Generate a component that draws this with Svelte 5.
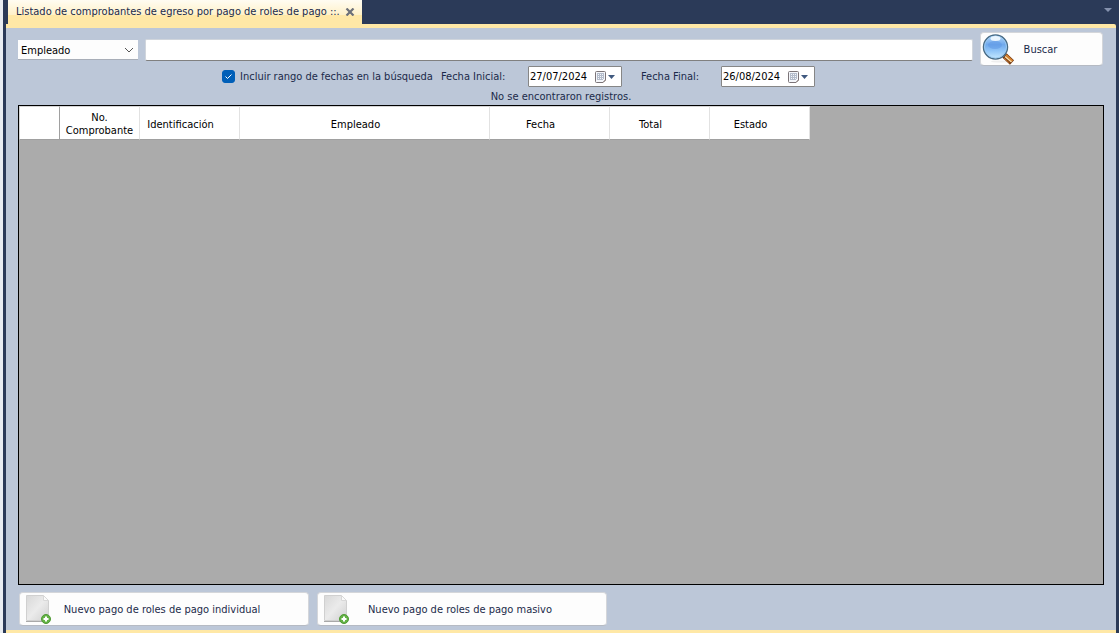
<script>
  let field = $state('Empleado');
  let query = $state('');
  let useRange = $state(true);
  let from = $state('27/07/2024');
  let to = $state('26/08/2024');
  const columns = [
    { name: 'Identificación', cls: 'c100' },
    { name: 'Empleado', cls: 'c250' },
    { name: 'Fecha', cls: 'c120' },
    { name: 'Total', cls: 'c100' },
    { name: 'Estado', cls: 'c100' }
  ];
  const actions = ['Nuevo pago de roles de pago individual', 'Nuevo pago de roles de pago masivo'];
</script>

{#snippet calendar()}
  <svg width="22" height="14" viewBox="0 0 22 14" aria-hidden="true">
    <path d="M2.500 1.500h8q1 0 1 1v7.500l-2.500 2.500h-6.500q-1 0-1-1v-9q0-1 1-1z" fill="#f4f6fa" stroke="#7b7478" />
    <path d="M3 3.500h7M3 5.500h7M3 7.500h7M3 9.500h6M3.500 3v7M5.500 3v7M7.500 3v7M9.500 3v6" stroke="#b3bccb" fill="none" />
    <path d="M9 12.500l2.500-2.500" fill="none" stroke="#8c7f7c" />
    <path d="M14 5h7l-3.500 4z" fill="#40597f" />
  </svg>
{/snippet}

<div class="window">
  <header>
    <div class="tab">
      <span>Listado de comprobantes de egreso por pago de roles de pago ::.</span>
      <button class="close" aria-label="Cerrar">
        <svg width="10" height="8" viewBox="0 0 10 8"><path d="M1.500 0.500l7 7M8.500 0.500l-7 7" stroke="#6c7079" stroke-width="2.200" /></svg>
      </button>
    </div>
    <button class="more" aria-label="Ventanas">
      <svg width="8" height="4" viewBox="0 0 8 4"><path d="M0 0h8l-4 4z" fill="#8592ae" /></svg>
    </button>
  </header>

  <main>
    <form class="search" onsubmit={(e) => e.preventDefault()}>
      <div class="combo">
        <select bind:value={field} aria-label="Campo">
          <option>Empleado</option>
          <option>Identificación</option>
        </select>
        <svg class="chevron" width="10" height="6" viewBox="0 0 10 6"><path d="M1 1l4 4 4-4" fill="none" stroke="#555" /></svg>
      </div>
      <input class="query" type="text" bind:value={query} aria-label="Texto" />
      <button class="action find">
        <svg width="34" height="32" viewBox="0 0 34 32" aria-hidden="true">
          <defs>
            <linearGradient id="lens" x1="0" y1="0" x2="0" y2="1">
              <stop offset="0" stop-color="#b4d8fb" />
              <stop offset="0.400" stop-color="#70a9ec" />
              <stop offset="0.650" stop-color="#8fc4f8" />
              <stop offset="1" stop-color="#c6eaff" />
            </linearGradient>
          </defs>
          <ellipse cx="19" cy="28.500" rx="9" ry="1" fill="#eee" />
          <path d="M22 20.500l3 3" stroke="#8a8f94" stroke-width="3" />
          <path d="M23.500 22.500l7.500 7" stroke="#6e3510" stroke-width="6" />
          <path d="M25 22l6.500 6" stroke="#d9822c" stroke-width="2" />
          <path d="M24 23.500l6.500 5.500" stroke="#ffe0a8" stroke-width="1.500" />
          <path d="M23 25l5.500 5" stroke="#c9772c" stroke-width="1" />
          <circle cx="14.500" cy="14" r="12" fill="url(#lens)" stroke="#496b85" stroke-width="1.500" />
          <circle cx="14.500" cy="14" r="11" fill="none" stroke="#9ccaf0" />
          <ellipse cx="14" cy="12" rx="7" ry="4" fill="#5c96e4" opacity="0.500" />
          <ellipse cx="14.500" cy="5.500" rx="5" ry="2.500" fill="#f2faff" opacity="0.900" />
        </svg>
        <span>Buscar</span>
      </button>
    </form>

    <div class="range">
      <label class="check">
        <input type="checkbox" bind:checked={useRange} />
        <span>Incluir rango de fechas en la búsqueda</span>
      </label>
      <label for="from">Fecha Inicial:</label>
      <div class="date">
        <input id="from" type="text" bind:value={from} />
        <button aria-label="Abrir calendario inicial">{@render calendar()}</button>
      </div>
      <label for="to">Fecha Final:</label>
      <div class="date">
        <input id="to" type="text" bind:value={to} />
        <button aria-label="Abrir calendario final">{@render calendar()}</button>
      </div>
    </div>

    <p class="status">No se encontraron registros.</p>

    <div class="grid">
      <table>
        <thead>
          <tr>
            <th class="corner"></th>
            <th class="number">No. Comprobante</th>
            {#each columns as c}
              <th class={c.cls}>{c.name}</th>
            {/each}
          </tr>
        </thead>
      </table>
    </div>

    <footer>
      {#each actions as a}
        <button class="action new">
          <svg width="28" height="30" viewBox="0 0 28 30" aria-hidden="true">
            <defs>
              <linearGradient id="page" x1="0" y1="0" x2="1" y2="1">
                <stop offset="0" stop-color="#d8d8d8" />
                <stop offset="0.500" stop-color="#ebebeb" />
                <stop offset="1" stop-color="#d0d0d0" />
              </linearGradient>
            </defs>
            <path d="M2 27.500h23" stroke="#a9a9a9" />
            <path d="M2.500 1.500h17l5 5v20h-22z" fill="url(#page)" stroke="#d0d0d0" />
            <path d="M19.500 1.500v5h5z" fill="#fafafa" stroke="#d8d8d8" />
            <circle cx="22" cy="25" r="4.500" fill="#63b244" stroke="#4f9a35" />
            <path d="M22 22.500v5M19.500 25h5" stroke="#fff" stroke-width="2" />
          </svg>
          <span>{a}</span>
        </button>
      {/each}
    </footer>
  </main>
</div>

<style>
  :global(body) { margin: 0; background: #2b3a58; }
  .window {
    box-sizing: border-box;
    min-height: 100vh;
    display: flex;
    flex-direction: column;
    padding: 0 3px 0 6px;
    background: linear-gradient(90deg, #e9edf2 3px, #2b3a58 3px);
    font: 11px/13px Tahoma, "DejaVu Sans Condensed", "DejaVu Sans", sans-serif;
    color: #1b2a4a;
  }
  button, input, select { font: inherit; color: inherit; margin: 0; box-sizing: border-box; }
  button { padding: 0; border: 0; background: none; }
  svg { display: block; flex: none; }
  header { display: flex; justify-content: space-between; height: 24px; padding: 0 4px 0 2px; }
  .tab {
    box-sizing: border-box;
    width: 354px;
    display: flex;
    justify-content: space-between;
    align-items: center;
    padding: 0 7px 1px 8px;
    background: linear-gradient(#fffcf2 0, #fff1c8 15px, #ffe8a6 15px);
    white-space: nowrap;
  }
  .more { padding: 0; height: 20px; }
  main {
    flex: 1;
    display: flex;
    flex-direction: column;
    padding: 4px 12px 4px;
    border-top: 4px solid #ffe8a6;
    border-bottom: 3px solid #ffe8a6;
    border-radius: 0 2px 0 0;
    background: #bcc7d8;
  }
  .search { display: flex; align-items: center; height: 34px; margin-right: 1px; }
  .combo { display: grid; align-items: center; width: 120px; height: 22px; margin: 2px 7px 0 0; }
  .combo select, .chevron { grid-area: 1 / 1; }
  select {
    appearance: none;
    width: 100%;
    height: 20px;
    padding: 1px 3px 0;
    border: 0;
    border-bottom: 1px solid #a8aeb8;
    border-radius: 0;
    background: #fdfdfd;
    color: #000;
  }
  .chevron { justify-self: end; margin-right: 4px; pointer-events: none; }
  .query {
    flex: 1;
    min-width: 0;
    height: 22px;
    padding: 0 3px;
    border: 1px solid #d0d5dc;
    border-bottom-color: #808080;
    border-radius: 2px;
    background: #fff;
    margin: 2px 7px 0 0;
  }
  .action {
    display: flex;
    align-items: center;
    border: 1px solid #d4d6da;
    border-bottom-color: #b5bac3;
    border-radius: 4px;
    background: #fdfdfd;
    text-align: center;
  }
  .action span { flex: 1; margin-right: 36px; }
  .find { width: 123px; height: 34px; }
  .range {
    display: grid;
    grid-template-columns: 219px 87px 113px 80px 94px;
    align-items: center;
    height: 21px;
    padding-left: 204px;
    white-space: nowrap;
  }
  .check { display: flex; align-items: center; gap: 5px; }
  .check input {
    appearance: none;
    width: 13px;
    height: 13px;
    border-radius: 3px;
    border: 1px solid #005fb8;
    background: #fff;
  }
  .check input:checked {
    background: #005fb8 url("data:image/svg+xml,%3Csvg xmlns='http://www.w3.org/2000/svg' viewBox='0 0 11 11'%3E%3Cpath d='M2.500 5.500l2 2 4-4' fill='none' stroke='white'/%3E%3C/svg%3E") center;
  }
  .date {
    box-sizing: border-box;
    display: flex;
    align-items: center;
    width: 94px;
    height: 21px;
    border: 1px solid #868686;
    border-radius: 1px;
    background: #fff;
    color: #000;
  }
  .date input { flex: 1; min-width: 0; height: 18px; padding: 0 1px; border: 0; background: none; }
  .date button { margin-right: 5px; }
  .status { margin: 3px 0 2px; text-align: center; }
  .grid { flex: 1; border: 1px solid #000; background: #ababab; overflow: auto; }
  table { border-collapse: separate; border-spacing: 0; table-layout: fixed; width: 791px; color: #000; }
  th {
    box-sizing: border-box;
    height: 34px;
    padding: 2px 18px 0 0;
    border-top: 1px solid #d5d5d5;
    border-right: 1px solid #e2e2e2;
    border-bottom: 1px solid #a0a0a0;
    background: #fff;
    font-weight: normal;
  }
  .corner { width: 41px; padding: 0; border-right-color: #a0a0a0; border-left: 1px solid #d5d5d5; }
  .number { width: 80px; padding: 2px 0 0; }
  .c100 { width: 100px; }
  .c120 { width: 120px; }
  .c250 { width: 250px; }
  footer { display: flex; gap: 8px; padding: 7px 0 0 1px; }
  .new { width: 290px; height: 34px; padding-left: 4px; }
</style>
